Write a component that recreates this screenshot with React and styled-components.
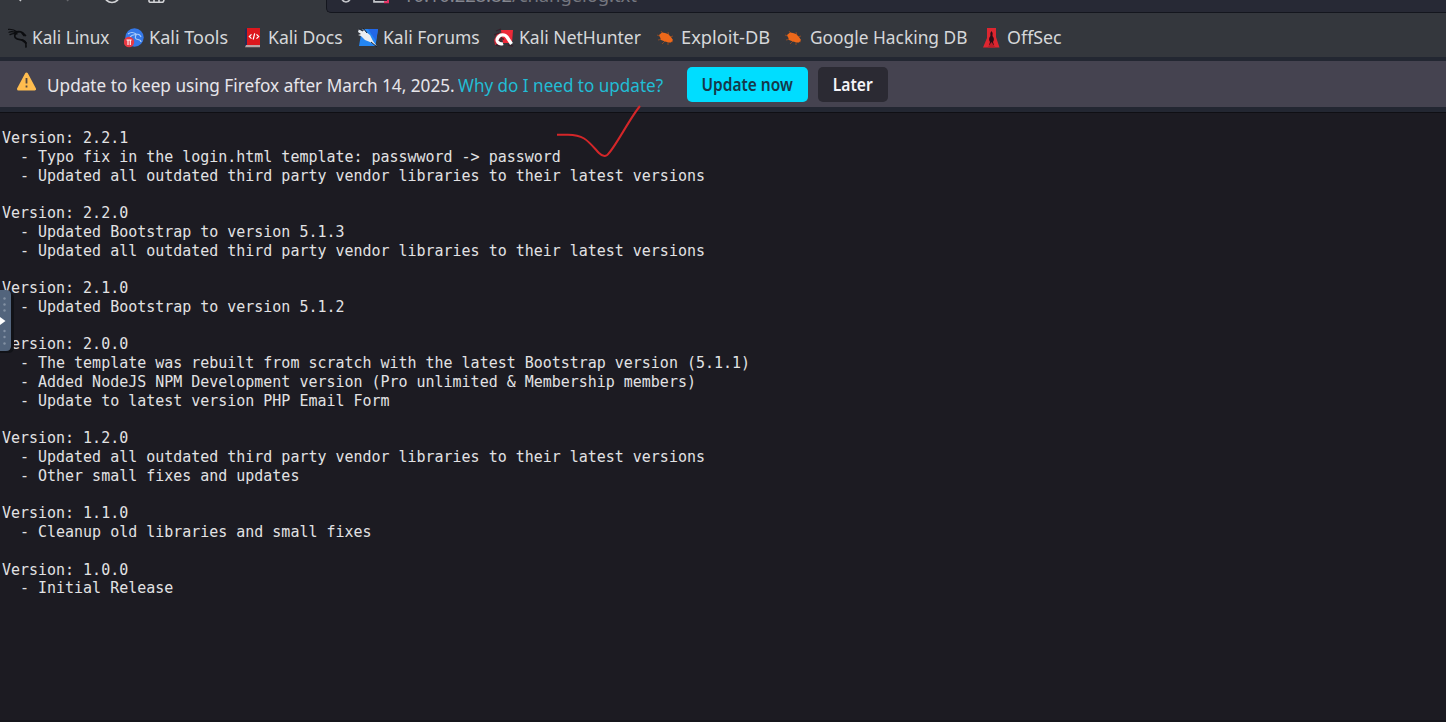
import React from "react";
import styled, { createGlobalStyle } from "styled-components";

const GlobalStyle = createGlobalStyle`
  * { box-sizing: border-box; }
  body { margin: 0; background: #1c1b22; overflow: hidden; }
`;

const Window = styled.div`
  position: relative;
  display: flex;
  flex-direction: column;
  width: 1446px;
  height: 722px;
  overflow: hidden;
  background: #1c1b22;
  border-bottom: 2px solid #15151b;
  color: #fbfbfe;
  font-family: "Noto Sans", sans-serif;
`;

const NavBar = styled.div`
  display: flex;
  flex: none;
  height: 13px;
  overflow: hidden;
  background: #34373d;
`;

const NavButtons = styled.svg`
  flex: none;
  width: 326px;
  height: 13px;
`;

const AddressBar = styled.div`
  display: flex;
  flex: 1;
  height: 13px;
  background: #272935;
  border: solid #14161e;
  border-width: 0 0 1px 1px;
  border-bottom-left-radius: 5px;
`;

const AddressIcons = styled.svg`
  flex: none;
  width: 76px;
  height: 12px;
`;

const Url = styled.span`
  margin-top: -17px;
  height: 24px;
  line-height: 24px;
  font-size: 18.5px;
  letter-spacing: -0.1px;
  white-space: nowrap;
  color: #84868f;
`;

const Path = styled.span`
  color: #74767f;
`;

const Bookmarks = styled.nav`
  display: flex;
  flex: none;
  height: 44px;
  padding-left: 8px;
  background: #34373d;
`;

const Bookmark = styled.div`
  display: flex;
  align-items: center;
  flex: none;
  width: ${(p) => p.$width}px;
  height: 48px;
  color: #d6d7da;
`;

const BookmarkIcon = styled.svg`
  flex: none;
  width: 20px;
  height: 20px;
  margin-top: 1px;
  margin-right: ${(p) => p.$gap}px;
`;

const Label = styled.span`
  flex: none;
  font-size: ${(p) => p.$size || 18.5}px;
  font-weight: ${(p) => p.$weight || 400};
  line-height: 24px;
  white-space: pre;
  transform: scaleX(${(p) => p.$scale || 1});
  transform-origin: ${(p) => p.$origin || "left"} center;
`;

const Divider = styled.div`
  flex: none;
  height: ${(p) => p.$height}px;
  background: #232732;
  border-bottom: ${(p) => (p.$edge ? "1px solid #0f0f14" : "none")};
`;

const Notice = styled.div`
  display: flex;
  align-items: center;
  flex: none;
  height: 46px;
  padding-left: 16px;
  background: #454350;
`;

const WarningIcon = styled.svg`
  flex: none;
  width: 21px;
  height: 20px;
  margin: -5px 10px 0 0;
`;

const NoticeText = styled.div`
  display: flex;
  flex: none;
  width: ${(p) => p.$width}px;
  padding-top: 1px;
  color: ${(p) => p.$color};
`;

const Button = styled.button`
  display: flex;
  align-items: center;
  justify-content: center;
  flex: none;
  width: ${(p) => p.$width}px;
  height: 35px;
  margin: 0 10px 0 0;
  padding: 1px 0 0;
  border: 0;
  border-radius: 5px;
  background: ${(p) => (p.$primary ? "#00ddff" : "#2b2a33")};
  color: ${(p) => (p.$primary ? "#16384a" : "#f4f4f8")};
  font-family: inherit;
`;

const Changelog = styled.pre`
  margin: 0;
  padding: 16px 0 0 2px;
  color: #e2e2e4;
  font: 14.98px/18.76px "DejaVu Sans Mono", monospace;
`;

const SideHandle = styled.svg`
  position: absolute;
  left: 0;
  top: 286px;
  width: 18px;
  height: 72px;
`;

const PenMark = styled.svg`
  position: absolute;
  left: 550px;
  top: 100px;
  width: 100px;
  height: 64px;
`;

const Dragon = () => (
  <g fill="none" stroke="#0c0d10" strokeLinecap="round" strokeLinejoin="round">
    <path d="M.5 1.3Q5 .8 10 4.2M1 4.2Q5 2.8 9 5.5M2 6.6Q5 5 9 6" strokeWidth="1.2" />
    <path d="M7 4Q12 3 14.5 4.6L17.5 7.5M8 5C5 9 8 11.5 12 11.7C17 12 18.5 14 18 19" strokeWidth="1.7" />
    <path d="M14 5L16 7.5M14 12L18 15" strokeWidth="1.8" />
  </g>
);

const Tools = () => (
  <g>
    <circle cx="10.5" cy="9.5" r="9.2" fill="#3478e8" />
    <path d="M4 6Q8 3 12 6Q16 6 17 9M6 9Q9 6 12 7Q10 11 14 11.5Q17 12 17 14" fill="none" stroke="#a9cbfa" strokeWidth="1.2" />
    <circle cx="5" cy="14" r="5.2" fill="#e83943" />
    <path d="M2.5 12H7.6M4 12V17M6.3 12V17" fill="none" stroke="#fff" strokeWidth="1.1" />
  </g>
);

const Docs = () => (
  <g>
    <path d="M0 1L4 0V17L0 19Z" fill="#252c55" />
    <path d="M2 0H15V17H2Z" fill="#dc171d" />
    <path d="M1 17H15V19.3H0Z" fill="#b9a5a5" />
    <path d="M6.5 6.3L4.3 8.5L6.5 10.7M11.5 6.3L13.7 8.5L11.5 10.7M9.7 5.3L8.2 11.5" fill="none" stroke="#fff" strokeWidth="1.2" />
  </g>
);

const Forums = () => (
  <g>
    <path d="M4 1H20L17.5 18H1Z" fill="#2486f2" />
    <path d="M10 1H20L18 13Z" fill="#2267e8" />
    <path d="M1 1L4 2.5L5 0L8 4L12 7L15 13L19 18.5L12 14L7 12L3 8L0 7L3 6L0 4Z" fill="#e9edf1" />
    <path d="M1 1L5 3L5 0L9 5M13 14L19 19" fill="none" stroke="#17202e" strokeWidth="1" />
  </g>
);

const NetHunter = () => (
  <g>
    <path d="M7 2H19L18 15H9Z" fill="#ed2938" />
    <path d="M0 12L3 6L9 4L7 8L5 16L1 17Z" fill="#c92837" />
    <path d="M2 3L7 1M0 7L5 5M2 17L6 18M14 17L19 18" stroke="#37202a" strokeWidth="1.3" />
    <path d="M9 15.5C5 17 1.5 13 4 9.5C6 6 11 6 13 9L17.5 16" fill="none" stroke="#fff" strokeWidth="3.3" />
    <path d="M5 13Q7 9 10 11.5" fill="none" stroke="#542029" strokeWidth="1.4" />
  </g>
);

const Bug = () => (
  <g>
    <path d="M1 7L6 9M5 3L8 7M12 4L13 8M17 8L14 9M2 12L7 11M6 16L9 13M12 17L12 13M17 14L14 12" stroke="#9d4c21" strokeWidth=".8" />
    <path d="M3 7L6 4.5L9 5L12 6L15 9L17 12L15 14.5H13L9 13.5L5 12L4 9Z" fill="#ed681a" />
  </g>
);

const OffSec = () => (
  <g>
    <path d="M5 0H14V9L17.5 19.5H1L5 10Z" fill="#dd2630" />
    <path d="M9.5 3Q11.5 5 10.5 8Q13 11 11 14L12 17H7L8 14Q6 11 8.4 8Q7.5 5 9.5 3Z" fill="#280e16" />
    <path d="M9.5 14L13.5 19.5H5.5Z" fill="#ba1e29" />
  </g>
);

const bookmarks = [
  { label: "Kali Linux", Icon: Dragon, width: 116, gap: 4, scale: 0.93 },
  { label: "Kali Tools", Icon: Tools, width: 121, gap: 5, scale: 0.975 },
  { label: "Kali Docs", Icon: Docs, width: 113, gap: 3, scale: 0.95 },
  { label: "Kali Forums", Icon: Forums, width: 136, gap: 5, scale: 0.946 },
  { label: "Kali NetHunter", Icon: NetHunter, width: 162, gap: 5, scale: 0.948 },
  { label: "Exploit-DB", Icon: Bug, width: 128, gap: 5, scale: 0.987 },
  { label: "Google Hacking DB", Icon: Bug, width: 198, gap: 6, scale: 0.937 },
  { label: "OffSec", Icon: OffSec, width: 90, gap: 5, scale: 0.965 },
];

const changelog = `Version: 2.2.1
  - Typo fix in the login.html template: passwword -> password
  - Updated all outdated third party vendor libraries to their latest versions

Version: 2.2.0
  - Updated Bootstrap to version 5.1.3
  - Updated all outdated third party vendor libraries to their latest versions

Version: 2.1.0
  - Updated Bootstrap to version 5.1.2

Version: 2.0.0
  - The template was rebuilt from scratch with the latest Bootstrap version (5.1.1)
  - Added NodeJS NPM Development version (Pro unlimited & Membership members)
  - Update to latest version PHP Email Form

Version: 1.2.0
  - Updated all outdated third party vendor libraries to their latest versions
  - Other small fixes and updates

Version: 1.1.0
  - Cleanup old libraries and small fixes

Version: 1.0.0
  - Initial Release`;

export default function App() {
  return (
    <Window>
      <GlobalStyle />
      <NavBar>
        <NavButtons viewBox="0 0 326 13">
          <path d="M18-2L21 1" stroke="#c9cacd" strokeWidth="1.5" />
          <path d="M70-2L67 1" stroke="#65676c" strokeWidth="1.5" />
          <circle cx="112" cy="-5" r="7.5" fill="none" stroke="#d2d3d6" strokeWidth="1.7" />
          <path d="M149-3V1Q149 2.3 151 2.3H162Q164 2.3 164-1M154-3V2M159-3V2" fill="none" stroke="#d2d3d6" strokeWidth="1.6" />
        </NavButtons>
        <AddressBar>
          <AddressIcons viewBox="0 0 76 12">
            <path d="M14-4Q15 2 19 2Q23 2 24-4" fill="none" stroke="#c4c5ca" strokeWidth="1.7" />
            <path d="M47-3V1.8H61" fill="none" stroke="#c4c5ca" strokeWidth="1.7" />
            <path d="M57 2.3H61V-1" fill="none" stroke="#e62c61" strokeWidth="2" />
          </AddressIcons>
          <Url>10.10.228.82<Path>/changelog.txt</Path></Url>
        </AddressBar>
      </NavBar>
      <Bookmarks>
        {bookmarks.map(({ label, Icon, width, gap, scale }) => (
          <Bookmark key={label} $width={width}>
            <BookmarkIcon viewBox="0 0 20 20" $gap={gap}><Icon /></BookmarkIcon>
            <Label $scale={scale}>{label}</Label>
          </Bookmark>
        ))}
      </Bookmarks>
      <Divider $height={4} />
      <Notice>
        <WarningIcon viewBox="0 0 21 20">
          <path d="M10.5 2L18.5 17H2.5Z" fill="#ffbd4f" stroke="#ffbd4f" strokeWidth="3" strokeLinejoin="round" />
          <path d="M10.5 6V11.5M10.5 13.5V15.5" stroke="#55483f" strokeWidth="1.8" />
        </WarningIcon>
        <NoticeText $width={411} $color="#e6e5ea"><Label $scale={0.929}>Update to keep using Firefox after March 14, 2025.</Label></NoticeText>
        <NoticeText $width={229} $color="#22bdd5"><Label $scale={0.923}>Why do I need to update?</Label></NoticeText>
        <Button $primary $width={121}><Label $size={17} $weight={600} $scale={0.91} $origin="center">Update now</Label></Button>
        <Button $width={70}><Label $size={17} $weight={600} $scale={0.92} $origin="center">Later</Label></Button>
      </Notice>
      <Divider $height={6} $edge />
      <Changelog>{changelog}</Changelog>
      <SideHandle viewBox="0 0 18 72">
        <path d="M0 7H9Q14 7 14 13V60Q14 67 9 67H0Z" fill="#111217" />
        <path d="M0 4H6Q11 4 11 9V60Q11 65 6 65H0Z" fill="#52647c" />
        <g fill="#8290a3"><circle cx="4.5" cy="12.5" r="1.2" /><circle cx="4.5" cy="18.5" r="1.2" /><circle cx="4.5" cy="24.5" r="1.2" /><circle cx="4.5" cy="45" r="1.2" /><circle cx="4.5" cy="51" r="1.2" /><circle cx="4.5" cy="57.5" r="1.2" /></g>
        <path d="M0 31L5.5 35L0 39Z" fill="#fff" />
      </SideHandle>
      <PenMark viewBox="0 0 100 64">
        <path d="M7 34.7H18C34 34.7 38 41 49 53Q55 59 59 53C67 44 80 18 90 6" fill="none" stroke="#d42629" strokeWidth="2" />
      </PenMark>
    </Window>
  );
}
